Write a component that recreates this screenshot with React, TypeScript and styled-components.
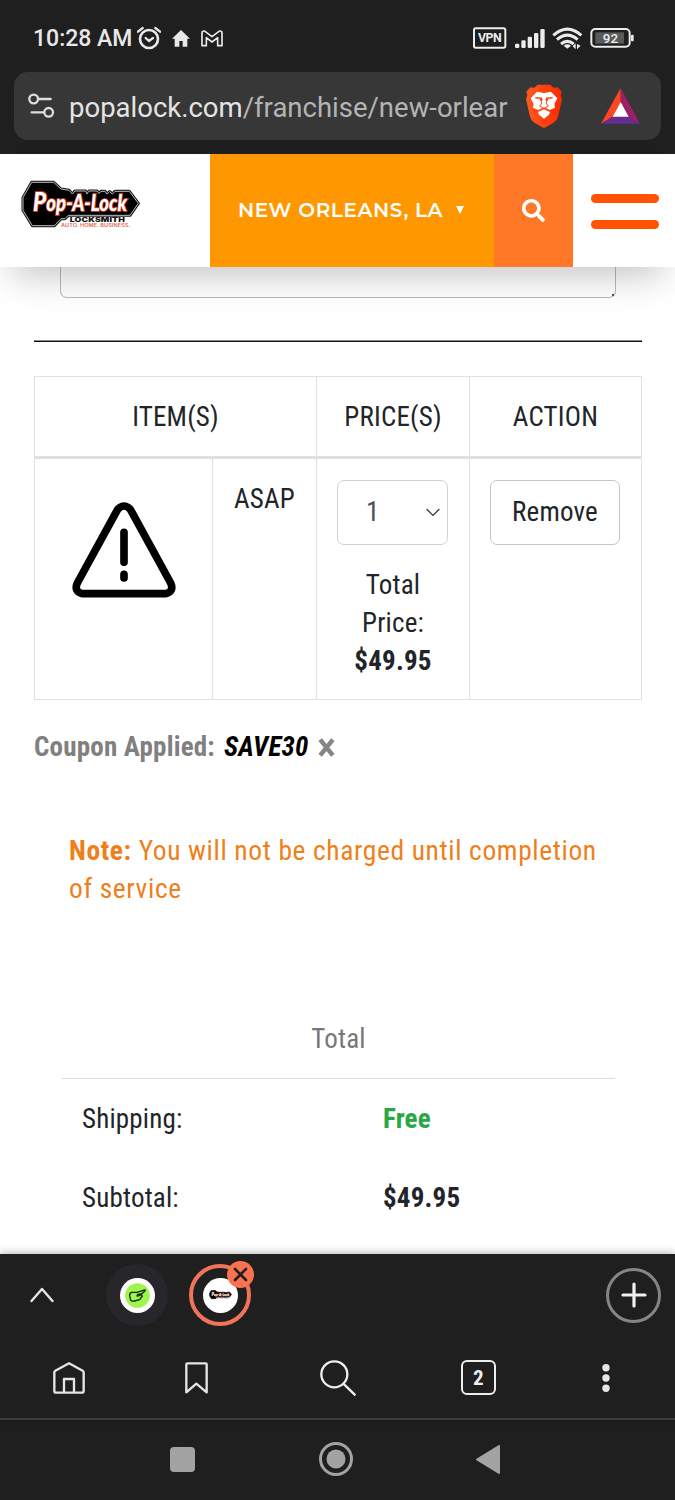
import React from 'react';
import styled, { createGlobalStyle } from 'styled-components';
import { FaSearch } from 'react-icons/fa';

const Global = createGlobalStyle`
  * { box-sizing: border-box; }
  body { margin: 0; background: #fff; }
`;

const Screen = styled.div`
  width: 675px;
  height: 1500px;
  display: flex;
  flex-direction: column;
  overflow: hidden;
  background: #fff;
  font-family: 'Roboto Condensed', Roboto, sans-serif;
  font-stretch: 75%;
  font-size: 27px;
  line-height: 38px;
  letter-spacing: 0.2px;
  color: #212529;
`;

const BrowserTop = styled.div`
  height: 154px;
  background: #1f1f1f;
  font-family: Roboto, sans-serif;
  font-stretch: 100%;
  letter-spacing: 0;
`;

const StatusBar = styled.div`
  height: 72px;
  padding: 4px 39px 0 33px;
  display: flex;
  align-items: center;
  justify-content: space-between;
  color: #e8e8e8;
`;

const StatusGroup = styled.div`
  display: flex;
  align-items: center;
`;

const Clock = styled.span`
  width: 104px;
  padding-top: 2px;
  font-size: 23px;
  font-weight: 500;
  white-space: nowrap;
`;

const AddressBar = styled.div`
  height: 68px;
  margin: 0 14px;
  padding: 0 21px 0 14px;
  border-radius: 14px;
  background: #373737;
  display: flex;
  align-items: center;
`;

const Address = styled.div`
  width: 442px;
  margin: 4px 14px 0 14px;
  overflow: hidden;
  white-space: nowrap;
  font-size: 27.5px;
  color: #b4b4b4;
`;

const Host = styled.span`
  color: #e4e4e4;
`;

const SiteHeader = styled.header`
  position: relative;
  z-index: 1;
  height: 113px;
  flex: none;
  display: flex;
  background: #fff;
  box-shadow: 0 20px 36px -12px rgba(0, 0, 0, 0.24);
`;

const Brand = styled.div`
  width: 210px;
  padding: 26px 0 0 20px;
`;

const Location = styled.div`
  width: 284px;
  padding: 0 0 2px 28px;
  display: flex;
  align-items: center;
  background: #ff9800;
  color: #fff;
  font-family: Montserrat, Inter, sans-serif;
  font-stretch: 100%;
  font-size: 20px;
  font-weight: 600;
  letter-spacing: 0.6px;
  white-space: nowrap;
`;

const Caret = styled.i`
  margin-left: 13px;
  border: 4px solid transparent;
  border-top: 8px solid #fff;
  border-bottom: 0;
`;

const SearchTile = styled.div`
  width: 79px;
  display: flex;
  align-items: center;
  justify-content: center;
  background: #ff7828;
  color: #fff;
`;

const Burger = styled.div`
  padding: 40px 0 0 18px;
  display: flex;
  flex-direction: column;
  gap: 17px;
`;

const BurgerLine = styled.i`
  width: 68px;
  height: 9px;
  border-radius: 5px;
  background: #ff5303;
`;

const Main = styled.main`
  height: 987px;
  flex: none;
  padding: 0 33px 0 34px;
  overflow: hidden;
`;

const NotesField = styled.div`
  height: 31px;
  margin: 0 26px;
  padding: 0 1px 1px 0;
  border: 1px solid #b9b9b9;
  border-top: 0;
  border-radius: 0 0 7px 7px;
  display: flex;
  align-items: flex-end;
  justify-content: flex-end;
`;

const Grip = styled.i`
  width: 2px;
  height: 2px;
  background: #555;
`;

const Divider = styled.div`
  height: 2px;
  margin-top: 42px;
  border-top: 1px solid #8a8a8a;
  background: #111;
`;

const CartTable = styled.div`
  margin-top: 34px;
  height: 324px;
  display: grid;
  grid-template-columns: 178px 104px 153px 172px;
  grid-template-rows: 82px 241px;
  border-top: 1px solid #dee2e6;
  border-left: 1px solid #dee2e6;
  text-align: center;
`;

const HeadCell = styled.div<{ $span?: number }>`
  grid-column: span ${(p) => p.$span ?? 1};
  padding-top: 21px;
  border-right: 1px solid #dee2e6;
  border-bottom: 3px solid #dee2e6;
`;

const Cell = styled.div<{ $top: number }>`
  padding-top: ${(p) => p.$top}px;
  border-right: 1px solid #dee2e6;
  border-bottom: 1px solid #dee2e6;
  display: flex;
  flex-direction: column;
  align-items: center;
`;

const Quantity = styled.div`
  width: 111px;
  height: 65px;
  margin: 0 1px 21px 0;
  padding: 0 7px 1px 28px;
  border: 1px solid #ced4da;
  border-radius: 7px;
  display: flex;
  align-items: center;
  justify-content: space-between;
  color: #495057;
`;

const RemoveButton = styled.button`
  width: 130px;
  height: 65px;
  margin-right: 1px;
  padding: 0 0 2px;
  border: 1px solid #c4c6c8;
  border-radius: 7px;
  background: #fff;
  color: #212529;
  font: inherit;
  font-stretch: inherit;
  letter-spacing: inherit;
`;

const Coupon = styled.div`
  margin-top: 28px;
  display: flex;
  align-items: center;
  font-weight: 700;
  color: #808080;
`;

const Code = styled.em`
  margin: 0 10px 0 9px;
  color: #000;
`;

const Note = styled.p`
  margin: 66px 0 0 35px;
  width: 545px;
  font-size: 27.5px;
  letter-spacing: 0.62px;
  color: #ef7f1a;
`;

const Totals = styled.section`
  margin: 112px 27px 0 28px;
`;

const TotalsTitle = styled.div`
  height: 59px;
  border-bottom: 1px solid #dcdcdc;
  text-align: center;
  color: #777;
`;

const TotalsRow = styled.div`
  height: 79px;
  padding: 21px 0 0 20px;
  display: grid;
  grid-template-columns: 301px 1fr;
`;

const Amount = styled.b<{ $free?: boolean }>`
  color: ${(p) => (p.$free ? '#28a745' : '#212529')};
`;

const BrowserBottom = styled.div`
  position: relative;
  z-index: 1;
  height: 166px;
  flex: none;
  border-bottom: 2px solid #3d3d3d;
  background: #1f1f1f;
  box-shadow: 0 -1px 8px rgba(0, 0, 0, 0.3);
`;

const TabStrip = styled.div`
  height: 83px;
  padding: 0 14px 1px 29px;
  display: flex;
  align-items: center;
`;

const TabBubble = styled.div<{ $active?: boolean }>`
  position: relative;
  width: 62px;
  height: 62px;
  margin-left: ${(p) => (p.$active ? 21 : 51)}px;
  border-radius: 50%;
  border: ${(p) => (p.$active ? '4px solid #f0745a' : '0')};
  background: ${(p) => (p.$active ? 'transparent' : '#27272b')};
  display: flex;
  align-items: center;
  justify-content: center;
`;

const Favicon = styled.div`
  width: 35px;
  height: 35px;
  border-radius: 50%;
  background: #fff;
  display: flex;
  align-items: center;
  justify-content: center;
`;

const CloseBadge = styled.div`
  position: absolute;
  top: -7px;
  right: -7px;
  width: 27px;
  height: 27px;
  border-radius: 50%;
  background: #fa7250;
  display: flex;
  align-items: center;
  justify-content: center;
`;

const NewTab = styled.div`
  width: 55px;
  height: 55px;
  margin-left: auto;
  border: 3px solid #858585;
  border-radius: 50%;
  display: flex;
  align-items: center;
  justify-content: center;
`;

const Toolbar = styled.div`
  height: 81px;
  padding-left: 53px;
  display: grid;
  grid-template-columns: 132px 135px 141px 141px 1fr;
  align-items: center;
`;

const TabCount = styled.div`
  width: 35px;
  height: 35px;
  border: 2.5px solid #eee;
  border-radius: 6px;
  display: flex;
  align-items: center;
  justify-content: center;
  color: #eee;
  font-size: 21px;
  font-weight: 700;
`;

const SystemNav = styled.nav`
  height: 80px;
  flex: none;
  padding: 0 175px 2px 170px;
  display: flex;
  align-items: center;
  justify-content: space-between;
  background: #1f1f1f;
`;

const Square = styled.i`
  width: 25px;
  height: 25px;
  border-radius: 4px;
  background: #a3a3a3;
`;

function AlarmIcon() {
  return (
    <svg width="24" height="24" viewBox="0 0 72 72" fill="none" stroke="#e8e8e8" strokeLinecap="round">
      <circle cx="36" cy="39" r="27" strokeWidth="8" />
      <path d="M26 36l10 9 12-9" strokeWidth="7" />
      <path d="M3 17L17 6M69 17L55 6" strokeWidth="7" />
    </svg>
  );
}

function StatusHomeIcon() {
  return (
    <svg width="18" height="17" viewBox="0 0 54 51" fill="#e8e8e8" style={{ marginLeft: 11 }}>
      <path d="M27 0L54 26H46V50H32V33H22V50H8V26H0z" />
    </svg>
  );
}

function MailIcon() {
  return (
    <svg width="22" height="17" viewBox="0 0 66 51" fill="none" stroke="#e8e8e8" strokeWidth="5" strokeLinejoin="round" style={{ marginLeft: 11 }}>
      <path d="M3 47V8Q4 1 12 4L33 20 54 4Q62 1 63 8V47H50V23L33 36 16 23V47z" />
    </svg>
  );
}

function StatusIcons() {
  return (
    <svg width="163" height="24" viewBox="400 77 489 72" fill="#ececec">
      <rect x="403" y="84" width="94" height="58" rx="5" fill="none" stroke="#ececec" strokeWidth="6" />
      <text x="415" y="126" fontFamily="Roboto" fontWeight="700" fontSize="37" textLength="71">VPN</text>
      <rect x="526" y="130" width="13" height="13" rx="4" />
      <rect x="545" y="120" width="13" height="23" rx="4" />
      <rect x="564" y="109" width="13" height="34" rx="4" />
      <rect x="583" y="98" width="13" height="45" rx="4" />
      <rect x="602" y="86" width="13" height="57" rx="4" />
      <g fill="none" stroke="#ececec" strokeWidth="9">
        <path d="M641 105Q683 68 725 105" />
        <path d="M652 118Q683 91 714 118" />
        <path d="M664 131Q683 115 702 131" />
      </g>
      <path d="M672 136Q683 128 694 136L683 145zM699 138l9-9v18zM712 131l11 5-11 11z" />
      <rect x="767" y="96" width="86" height="34" fill="#5a5a5a" />
      <rect x="755" y="86" width="115" height="53" rx="12" fill="none" stroke="#ececec" strokeWidth="6" />
      <rect x="874" y="103" width="8" height="20" rx="3" />
      <text x="789" y="128" fontFamily="Roboto" fontWeight="500" fontSize="40" textLength="46">92</text>
    </svg>
  );
}

function SiteSettingsIcon() {
  return (
    <svg width="27" height="26" viewBox="0 0 81 78" fill="none" stroke="#dedede" strokeWidth="7" strokeLinecap="round">
      <circle cx="17" cy="18" r="13" />
      <path d="M32 18H68M11 58H46" />
      <circle cx="62" cy="58" r="13" />
    </svg>
  );
}

function ShieldIcon() {
  return (
    <svg width="38" height="44" viewBox="0 0 114 132">
      <defs>
        <linearGradient id="shield">
          <stop offset="0" stopColor="#ff5a1f" />
          <stop offset="1" stopColor="#fb2a00" />
        </linearGradient>
      </defs>
      <path d="M38 2H76L86 11 98 10 110 23 107 34 111 46 99 98Q96 109 86 116L62 130Q57 133 52 130L28 116Q18 109 15 98L3 46 7 34 4 23 16 10 28 11z" fill="url(#shield)" />
      <path d="M36 23L57 27 78 23 97 43 88 60 90 71 74 78 57 70 40 78 24 71 26 60 17 43z" fill="#fff" />
      <path d="M39 84L57 76 75 84 72 92 57 104 42 92z" fill="#fff" />
      <g fill="none" stroke="#fb4419">
        <path d="M31 42L48 42 50 46 45 49M83 42L66 42 64 46 69 49" strokeWidth="5" />
        <path d="M50 46L49 60 44 66 57 74 70 66 65 60 64 46" strokeWidth="3" />
      </g>
    </svg>
  );
}

function TriangleLogo() {
  return (
    <svg width="39" height="36" viewBox="0 0 117 108" style={{ marginLeft: 38 }}>
      <path d="M59 0L0 107 37 85 59 42z" fill="#ff4724" />
      <path d="M59 0L117 107 80 85 59 42z" fill="#9e1f63" />
      <path d="M0 107L37 85H80L117 107z" fill="#662d91" />
      <path d="M59 42L35 86H83z" fill="#fff" />
    </svg>
  );
}

function PopALockLogo({ width = 121 }: { width?: number }) {
  const key =
    'M50 22H116L138 42 162 46 172 57 180 48H212L216 57 222 48H246L252 56 258 49H270L276 57 284 50 292 57 300 49H343L370 85 345 121H160L150 131H138L118 152H52L24 106V68z';
  return (
    <svg width={width} height={(width * 52) / 121} viewBox="15 15 363 156">
      <path d={key} stroke="#161616" strokeWidth="9" strokeLinejoin="round" />
      <path d={key} stroke="#bdbdbd" strokeWidth="3" strokeLinejoin="round" />
      <text
        x="54"
        y="107"
        fontFamily="Lato, sans-serif"
        fontStyle="italic"
        fontWeight="900"
        fontSize="66"
        textLength="282"
        lengthAdjust="spacingAndGlyphs"
        fill="#fff"
        stroke="#c8381c"
        strokeWidth="6"
        paintOrder="stroke"
      >
        <tspan fontSize="80">P</tspan>op-A-Lock
      </text>
      <text x="164" y="142" fontFamily="Inter, sans-serif" fontWeight="900" fontSize="18" textLength="166" lengthAdjust="spacingAndGlyphs" fill="#111">LOCKSMITH</text>
      <text x="138" y="157" fontFamily="Inter, sans-serif" fontWeight="600" fontSize="13" textLength="208" lengthAdjust="spacingAndGlyphs" fill="#e2694d">AUTO. HOME. BUSINESS.</text>
    </svg>
  );
}

function WarningIcon() {
  return (
    <svg width="104" height="96" viewBox="0 0 312 288" fill="none" stroke="#000" strokeWidth="23" strokeLinecap="round" strokeLinejoin="round">
      <path d="M137 22Q156 2 175 22L296 243Q307 268 282 275H30Q5 268 16 243z" />
      <path d="M156 91V181M156 217V228" />
    </svg>
  );
}

function ChevronDown() {
  return (
    <svg width="14" height="9" viewBox="0 0 14 9" fill="none" stroke="#343a40" strokeWidth="1.3">
      <path d="M.6 1L7 7.4 13.4 1" />
    </svg>
  );
}

function RemoveCoupon() {
  return (
    <svg width="17" height="19" viewBox="0 0 15 18" stroke="#858585" strokeWidth="4.2">
      <path d="M1.5 1.5L13.5 16.5M13.5 1.5L1.5 16.5" />
    </svg>
  );
}

function HandIcon() {
  return (
    <svg width="25" height="25" viewBox="0 0 75 75">
      <circle cx="37.5" cy="37.5" r="37" fill="#9df64c" />
      <path d="M62 20L36 28H20Q13 30 14 38L17 51Q19 56 28 54L44 50 52 39 48 33 38 34 36 39 43 38 61 23" fill="none" stroke="#16240c" strokeWidth="4" strokeLinejoin="round" />
    </svg>
  );
}

function HomeIcon() {
  return (
    <svg width="32" height="32" viewBox="0 0 96 96" fill="none" stroke="#e6e6e6" strokeWidth="7" strokeLinejoin="round">
      <path d="M4 31Q4 28 7 26L48 4 89 26Q92 28 92 31V87Q92 92 87 92H9Q4 92 4 87zM33 92V51H63V92" />
    </svg>
  );
}

function BookmarkIcon() {
  return (
    <svg width="23" height="32" viewBox="0 0 69 96" fill="none" stroke="#e6e6e6" strokeWidth="7" strokeLinejoin="round">
      <path d="M4 7Q4 4 7 4H62Q65 4 65 7V91L34 65 4 91z" />
    </svg>
  );
}

function SearchIcon() {
  return (
    <svg width="36" height="36" viewBox="0 0 108 108" fill="none" stroke="#eee" strokeWidth="7" strokeLinecap="round">
      <circle cx="43" cy="43" r="39" />
      <path d="M70 71L104 104" />
    </svg>
  );
}

export default function App() {
  return (
    <Screen>
      <Global />
      <BrowserTop>
        <StatusBar>
          <StatusGroup>
            <Clock>10:28 AM</Clock>
            <AlarmIcon />
            <StatusHomeIcon />
            <MailIcon />
          </StatusGroup>
          <StatusIcons />
        </StatusBar>
        <AddressBar>
          <SiteSettingsIcon />
          <Address>
            <Host>popalock.com</Host>/franchise/new-orlear
          </Address>
          <ShieldIcon />
          <TriangleLogo />
        </AddressBar>
      </BrowserTop>

      <SiteHeader>
        <Brand>
          <PopALockLogo />
        </Brand>
        <Location>
          NEW ORLEANS, LA
          <Caret />
        </Location>
        <SearchTile>
          <FaSearch size={23} />
        </SearchTile>
        <Burger>
          <BurgerLine />
          <BurgerLine />
        </Burger>
      </SiteHeader>

      <Main>
        <NotesField>
          <Grip />
        </NotesField>
        <Divider />
        <CartTable>
          <HeadCell $span={2}>ITEM(S)</HeadCell>
          <HeadCell>PRICE(S)</HeadCell>
          <HeadCell>ACTION</HeadCell>
          <Cell $top={43}>
            <WarningIcon />
          </Cell>
          <Cell $top={21}>ASAP</Cell>
          <Cell $top={21}>
            <Quantity>
              1<ChevronDown />
            </Quantity>
            <span>Total</span>
            <span>Price:</span>
            <b>$49.95</b>
          </Cell>
          <Cell $top={21}>
            <RemoveButton>Remove</RemoveButton>
          </Cell>
        </CartTable>
        <Coupon>
          Coupon Applied:
          <Code>SAVE30</Code>
          <RemoveCoupon />
        </Coupon>
        <Note>
          <b>Note:</b> You will not be charged until completion of service
        </Note>
        <Totals>
          <TotalsTitle>Total</TotalsTitle>
          <TotalsRow>
            <span>Shipping:</span>
            <Amount $free>Free</Amount>
          </TotalsRow>
          <TotalsRow>
            <span>Subtotal:</span>
            <Amount>$49.95</Amount>
          </TotalsRow>
        </Totals>
      </Main>

      <BrowserBottom>
        <TabStrip>
          <svg width="26" height="16" viewBox="0 0 26 16" fill="none" stroke="#e6e6e6" strokeWidth="2.4" strokeLinecap="round" strokeLinejoin="round">
            <path d="M2.5 14L13 2 23.5 14" />
          </svg>
          <TabBubble>
            <Favicon>
              <HandIcon />
            </Favicon>
          </TabBubble>
          <TabBubble $active>
            <Favicon>
              <PopALockLogo width={23} />
            </Favicon>
            <CloseBadge>
              <svg width="15" height="15" viewBox="0 0 15 15" stroke="#1f1f1f" strokeWidth="2.6" strokeLinecap="round">
                <path d="M2 2L13 13M13 2L2 13" />
              </svg>
            </CloseBadge>
          </TabBubble>
          <NewTab>
            <svg width="26" height="26" viewBox="0 0 26 26" stroke="#f0f0f0" strokeWidth="3.2" strokeLinecap="round">
              <path d="M13 2V24M2 13H24" />
            </svg>
          </NewTab>
        </TabStrip>
        <Toolbar>
          <HomeIcon />
          <BookmarkIcon />
          <SearchIcon />
          <TabCount>2</TabCount>
          <svg width="8" height="28" viewBox="0 0 8 28" fill="#e6e6e6">
            <circle cx="4" cy="3.7" r="3.7" />
            <circle cx="4" cy="14" r="3.7" />
            <circle cx="4" cy="24.3" r="3.7" />
          </svg>
        </Toolbar>
      </BrowserBottom>
      <SystemNav>
        <Square />
        <svg width="34" height="34" viewBox="0 0 34 34">
          <circle cx="17" cy="17" r="15.5" fill="none" stroke="#a3a3a3" strokeWidth="3" />
          <circle cx="17" cy="17" r="9.5" fill="#a3a3a3" />
        </svg>
        <svg width="24" height="29" viewBox="0 0 24 29" fill="#a3a3a3" stroke="#a3a3a3" strokeWidth="2" strokeLinejoin="round">
          <path d="M23 1V28L1 14.5z" />
        </svg>
      </SystemNav>
    </Screen>
  );
}
